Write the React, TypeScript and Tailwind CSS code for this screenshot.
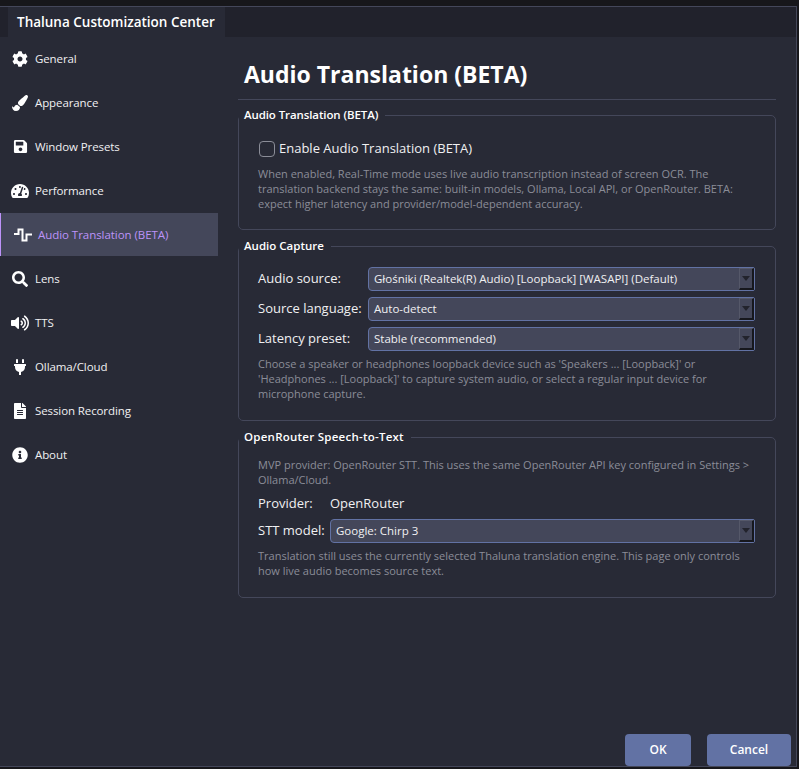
import type { ReactNode } from "react";
import {
  FaCog,
  FaFileAlt,
  FaInfoCircle,
  FaPaintBrush,
  FaPlug,
  FaSave,
  FaSearch,
  FaTachometerAlt,
  FaVolumeUp,
} from "react-icons/fa";

const PulseIcon = () => (
  <svg viewBox="0 0 18 14" className="h-[14px] w-[18px]" fill="none" stroke="currentColor" strokeWidth="2">
    <path d="M0 6h4.500V1.500h4V12.500h4V6.500H18" />
  </svg>
);

const NAV = [
  { label: "General", icon: <FaCog size={16} /> },
  { label: "Appearance", icon: <FaPaintBrush size={16} /> },
  { label: "Window Presets", icon: <FaSave size={15} /> },
  { label: "Performance", icon: <FaTachometerAlt size={18} /> },
  { label: "Audio Translation (BETA)", icon: <PulseIcon />, active: true },
  { label: "Lens", icon: <FaSearch size={16} /> },
  { label: "TTS", icon: <FaVolumeUp size={18} /> },
  { label: "Ollama/Cloud", icon: <FaPlug size={16} /> },
  { label: "Session Recording", icon: <FaFileAlt size={16} /> },
  { label: "About", icon: <FaInfoCircle size={16} /> },
];

function NavItem({ label, icon, active }: { label: string; icon: ReactNode; active?: boolean }) {
  if (active) {
    return (
      <div className="mb-px flex h-[43px] items-center border-l border-[#bd93f9] bg-[#44475a] pl-[13px] text-[11.500px] tracking-[-0.05px] text-[#bd93f9]">
        <span className="mr-[6px] flex w-[18px] justify-center text-white">{icon}</span>
        {label}
      </div>
    );
  }
  return (
    <div className="flex h-[44px] items-center pb-px pl-[11px] text-[11.500px] tracking-[-0.1px] text-[#f0f0f2]">
      <span className="mr-[6px] flex w-[18px] justify-center text-white">{icon}</span>
      {label}
    </div>
  );
}

function Group({ title, className, legendClass = "", children }: { title: string; className: string; legendClass?: string; children: ReactNode }) {
  return (
    <fieldset className={`rounded-[5px] border border-[#44475a] ${className}`}>
      <legend className={`pl-[5px] pr-[7px] pb-[2px] text-[11.500px] leading-[15px] font-semibold text-white ${legendClass}`}>{title}</legend>
      {children}
    </fieldset>
  );
}

function Combo({ value, className }: { value: string; className: string }) {
  return (
    <div className={`flex h-[24px] items-center rounded-l-[4px] rounded-r-[2px] border border-[#6272a4] bg-[#44475a] pl-[5px] text-[11.500px] text-[#f0f0f2] ${className}`}>
      <span className="flex-1 whitespace-nowrap">{value}</span>
      <span className="flex h-[22px] w-[15px] items-center justify-center border-r-2 border-b-2 border-l border-t border-b-[#16171d] border-l-[#555869] border-r-[#16171d] border-t-[#555869]">
        <span className="h-0 w-0 border-x-[4px] border-t-[5px] border-x-transparent border-t-[#22232c]" />
      </span>
    </div>
  );
}

function Hint({ children, className = "" }: { children: ReactNode; className?: string }) {
  return <p className={`whitespace-nowrap text-[11px] leading-[15px] text-[#8b8d98] ${className}`}>{children}</p>;
}

function Row({ label, width, children }: { label: string; width: string; children: ReactNode }) {
  return (
    <div className="flex items-center">
      <span className={`whitespace-nowrap text-[13px] text-[#f0f0f2] ${width}`}>{label}</span>
      {children}
    </div>
  );
}

export default function App() {
  return (
    <div className="flex h-[769px] w-[799px] flex-col overflow-hidden bg-[#17171b] pr-[2px] font-['Open_Sans',sans-serif]">
      <div className="h-[6px] shrink-0" />
      <div className="flex min-h-0 flex-1 flex-col border-t border-r border-[#44475a] bg-[#282a36]">
        <div className="flex h-[30px] shrink-0 bg-[#21222c] pl-[8px]">
          <div className="flex w-[217px] items-center bg-[#282a36] pl-[9px] text-[13.500px] font-semibold whitespace-nowrap text-white">
            Thaluna Customization Center
          </div>
        </div>
        <div className="flex min-h-0 flex-1">
          <aside className="w-[218px] shrink-0">
            {NAV.map((item) => (
              <NavItem key={item.label} {...item} />
            ))}
          </aside>
          <main className="flex min-w-0 flex-1 flex-col pl-[20px] pr-[20px]">
            <h1 className="flex h-[63px] shrink-0 items-center border-b border-[#44475a] pl-[6px] pt-[12px] text-[23px] font-bold text-white">
              Audio Translation (BETA)
            </h1>
            <Group title="Audio Translation (BETA)" legendClass="tracking-[-0.1px]" className="mt-[7px] h-[123px] shrink-0">
              <label className="mt-[15px] ml-[20px] flex items-center">
                <span className="mr-[4px] h-[16px] w-[16px] rounded-[4px] border border-[#8b8d98]" />
                <span className="text-[13px] text-[#f0f0f2]">Enable Audio Translation (BETA)</span>
              </label>
              <Hint className="mt-[7px] ml-[19px]">
                When enabled, Real-Time mode uses live audio transcription instead of screen OCR. The
                <br />
                translation backend stays the same: built-in models, Ollama, Local API, or OpenRouter. BETA:
                <br />
                expect higher latency and provider/model-dependent accuracy.
              </Hint>
            </Group>
            <Group title="Audio Capture" className="mt-[8px] h-[183px] shrink-0">
              <div className="mt-[12px] flex flex-col gap-[6px] pl-[19px] pr-[20px]">
                <Row label="Audio source:" width="w-[110px]">
                  <Combo value="Głośniki (Realtek(R) Audio) [Loopback] [WASAPI] (Default)" className="flex-1" />
                </Row>
                <Row label="Source language:" width="w-[110px]">
                  <Combo value="Auto-detect" className="flex-1" />
                </Row>
                <Row label="Latency preset:" width="w-[110px]">
                  <Combo value="Stable (recommended)" className="flex-1" />
                </Row>
              </div>
              <Hint className="mt-[5px] ml-[19px]">
                Choose a speaker or headphones loopback device such as 'Speakers ... [Loopback]' or
                <br />
                'Headphones ... [Loopback]' to capture system audio, or select a regular input device for
                <br />
                microphone capture.
              </Hint>
            </Group>
            <Group title="OpenRouter Speech-to-Text" legendClass="tracking-[0.25px]" className="mt-[8px] h-[169px] shrink-0">
              <Hint className="mt-[11px] ml-[19px]">
                MVP provider: OpenRouter STT. This uses the same OpenRouter API key configured in Settings &gt;
                <br />
                Ollama/Cloud.
              </Hint>
              <div className="mt-[7px] flex flex-col gap-[5px] pl-[19px] pr-[20px]">
                <Row label="Provider:" width="w-[72px]">
                  <span className="text-[13px] text-[#f0f0f2]">OpenRouter</span>
                </Row>
                <Row label="STT model:" width="w-[72px]">
                  <Combo value="Google: Chirp 3" className="flex-1" />
                </Row>
              </div>
              <Hint className="mt-[5px] ml-[19px]">
                Translation still uses the currently selected Thaluna translation engine. This page only controls
                <br />
                how live audio becomes source text.
              </Hint>
            </Group>
            <div className="mt-auto -mr-[15px] flex justify-end gap-[16px]">
              <button className="h-[32px] w-[66px] rounded-[4px] bg-[#6272a4] text-[12px] font-semibold text-white">OK</button>
              <button className="h-[32px] w-[84px] rounded-[4px] bg-[#6272a4] text-[12px] font-semibold text-white">Cancel</button>
            </div>
          </main>
        </div>
      </div>
      <div className="h-[3px] shrink-0 border-t border-[#44475a]" />
    </div>
  );
}
